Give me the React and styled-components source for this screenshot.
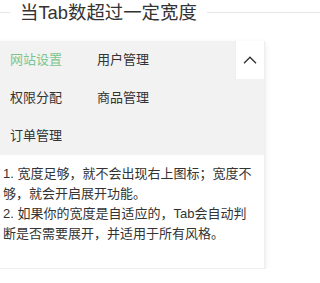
import React from 'react';
import styled, { createGlobalStyle } from 'styled-components';

const GlobalStyle = createGlobalStyle`
    body{
        margin:0;
        overflow:hidden;
        background:#fff;
        color:#333;
        font-family:"Liberation Sans","Noto Sans CJK SC",sans-serif;
    }
`

const FieldTitle = styled.div`
    display:flex;
    align-items:center;
    height:25px;
`

const TitleLine = styled.div`
    height:1px;
    background:#e6e6e6;
    width:${props => props.width ? props.width : 'auto'};
    flex:${props => props.grow ? 1 : 'none'};
`

const TitleText = styled.div`
    padding:0 10px;
    font-size:18.4px;
    line-height:25px;
    color:#333;
    white-space:nowrap;
`

const TabCard = styled.div`
    position:relative;
    margin-top:16px;
    width:264px;
    border:1px solid #eee;
    border-left:0;
    border-top:0;
    box-shadow:0 2px 5px 0 rgba(0,0,0,.1);
    background:#fff;
`

const TabTitle = styled.ul`
    display:flex;
    flex-wrap:wrap;
    margin:0;
    padding:0 30px 0 0;
    list-style:none;
    background:#f2f2f2;
`

const TabItem = styled.li`
    width:87px;
    height:38px;
    line-height:38px;
    padding-left:10px;
    box-sizing:border-box;
    font-size:13px;
    color:${props => props.active ? '#7cc58f' : '#333'};
    white-space:nowrap;
`

const TabBar = styled.span`
    position:absolute;
    top:0;
    right:0;
    width:29px;
    height:38px;
    display:flex;
    align-items:center;
    justify-content:center;
    background:#fff;
    border-left:1px solid #eee;
    box-sizing:border-box;
`

const TabContent = styled.div`
    padding:9px 10px 24px 3px;
    font-size:13px;
    line-height:20px;
    color:#333;
`

const tabs = [
    { name: '网站设置', active: true },
    { name: '用户管理' },
    { name: '权限分配' },
    { name: '商品管理' },
    { name: '订单管理' },
];

function App(){
    return(
        <>
            <GlobalStyle />
            <FieldTitle>
                <TitleLine width="10px" />
                <TitleText>当Tab数超过一定宽度</TitleText>
                <TitleLine grow />
            </FieldTitle>
            <TabCard>
                <TabTitle>
                    {tabs.map(tab => (
                        <TabItem key={tab.name} active={tab.active}>{tab.name}</TabItem>
                    ))}
                </TabTitle>
                <TabBar>
                    <svg width="14" height="8" viewBox="0 0 14 8">
                        <path d="M1 7.3 L7 1.3 L13 7.3" fill="none" stroke="#333" strokeWidth="1.4" />
                    </svg>
                </TabBar>
                <TabContent>
                    1. 宽度足够，就不会出现右上图标；宽度不够，就会开启展开功能。<br />
                    2. 如果你的宽度是自适应的，Tab会自动判断是否需要展开，并适用于所有风格。
                </TabContent>
            </TabCard>
        </>
    )
}

export default App
